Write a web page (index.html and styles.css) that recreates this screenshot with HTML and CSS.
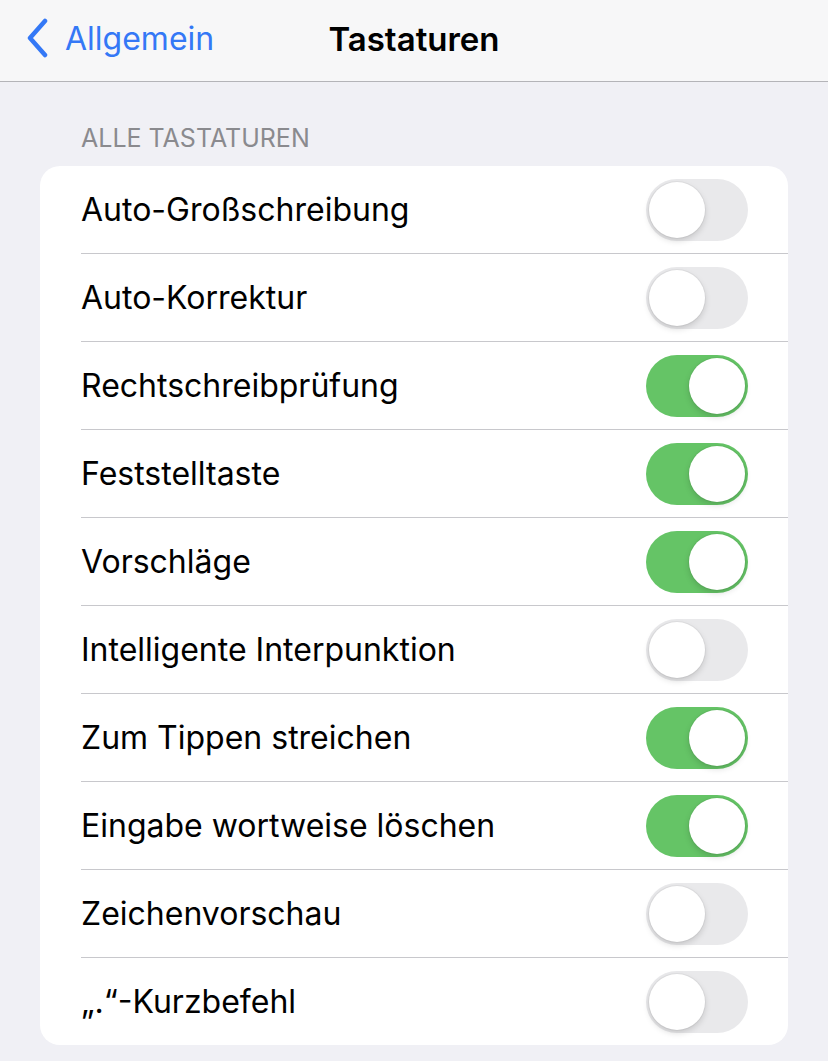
FILE: index.html
```html
<!DOCTYPE html>
<html lang="de">
<head>
    <meta charset="UTF-8">
    <meta name="viewport" content="width=device-width, initial-scale=1.0">
    <title>Tastaturen</title>
    <link rel="stylesheet" href="styles.css">
</head>
<body>
    <header class="nav-bar">
        <a class="nav-back" href="#">
            <svg class="nav-chevron" width="24" height="40" viewBox="0 0 24 40">
                <path d="M20 3 L5 20 L20 37" fill="none" stroke="currentColor" stroke-width="4.5" stroke-linecap="round" stroke-linejoin="round"/>
            </svg>
            <span>Allgemein</span>
        </a>
        <h1 class="nav-title">Tastaturen</h1>
    </header>

    <main class="content">
        <h2 class="section-title">ALLE TASTATUREN</h2>
        <ul class="group">
            <li class="row"><span class="row-label">Auto-Großschreibung</span><span class="toggle"></span></li>
            <li class="row"><span class="row-label">Auto-Korrektur</span><span class="toggle"></span></li>
            <li class="row"><span class="row-label">Rechtschreibprüfung</span><span class="toggle on"></span></li>
            <li class="row"><span class="row-label">Feststelltaste</span><span class="toggle on"></span></li>
            <li class="row"><span class="row-label">Vorschläge</span><span class="toggle on"></span></li>
            <li class="row"><span class="row-label">Intelligente Interpunktion</span><span class="toggle"></span></li>
            <li class="row"><span class="row-label">Zum Tippen streichen</span><span class="toggle on"></span></li>
            <li class="row"><span class="row-label">Eingabe wortweise löschen</span><span class="toggle on"></span></li>
            <li class="row"><span class="row-label">Zeichenvorschau</span><span class="toggle"></span></li>
            <li class="row"><span class="row-label">„.“-Kurzbefehl</span><span class="toggle"></span></li>
        </ul>
    </main>
</body>
</html>
```

FILE: styles.css
```css
/* Grundlagen */
:root {
    --bg-grouped: #f0f0f5;
    --bg-card: #ffffff;
    --bg-nav: #f7f7f8;
    --text-primary: #000000;
    --text-secondary: #8a8a8e;
    --ios-blue: #3478f6;
    --ios-green: #65c466;
    --separator: #c8c8cc;
    --toggle-off: #e9e9eb;
}

body {
    margin: 0;
    background: var(--bg-grouped);
    font-family: Inter, "Liberation Sans", sans-serif;
    color: var(--text-primary);
}

/* Navigationsleiste */
.nav-bar {
    position: relative;
    height: 81px;
    background: var(--bg-nav);
    border-bottom: 1px solid #b4b4b8;
    display: flex;
    align-items: center;
    justify-content: center;
}

.nav-back {
    position: absolute;
    left: 25px;
    top: 18px;
    display: flex;
    align-items: center;
    gap: 16px;
    color: var(--ios-blue);
    text-decoration: none;
    font-size: 32px;
}

.nav-chevron { display: block; }

.nav-title {
    margin: 0 0 4px;
    font-size: 33px;
    font-weight: 600;
}

/* Inhalt */
.content { padding: 39px 40px 16px; }

.section-title {
    margin: 0 0 11px 41px;
    font-size: 25px;
    font-weight: 400;
    color: var(--text-secondary);
    line-height: 34px;
}

.group {
    list-style: none;
    margin: 0;
    padding: 0;
    background: var(--bg-card);
    border-radius: 20px;
    overflow: hidden;
}

.row {
    height: 87px;
    margin-left: 41px;
    padding-right: 40px;
    display: flex;
    align-items: center;
    justify-content: space-between;
    border-bottom: 1px solid var(--separator);
}

.row:last-child { border-bottom: none; }

.row-label { font-size: 32px; }

/* Schalter */
.toggle {
    position: relative;
    width: 102px;
    height: 62px;
    border-radius: 31px;
    background: var(--toggle-off);
    transition: background 0.2s;
}

.toggle::after {
    content: "";
    position: absolute;
    top: 3px;
    left: 3px;
    width: 56px;
    height: 56px;
    border-radius: 50%;
    background: #fff;
    box-shadow: 0 3px 6px rgba(0, 0, 0, 0.15), 0 0 0 1px rgba(0, 0, 0, 0.04);
    transition: transform 0.2s;
}

.toggle.on { background: var(--ios-green); }
.toggle.on::after { transform: translateX(40px); }
```
